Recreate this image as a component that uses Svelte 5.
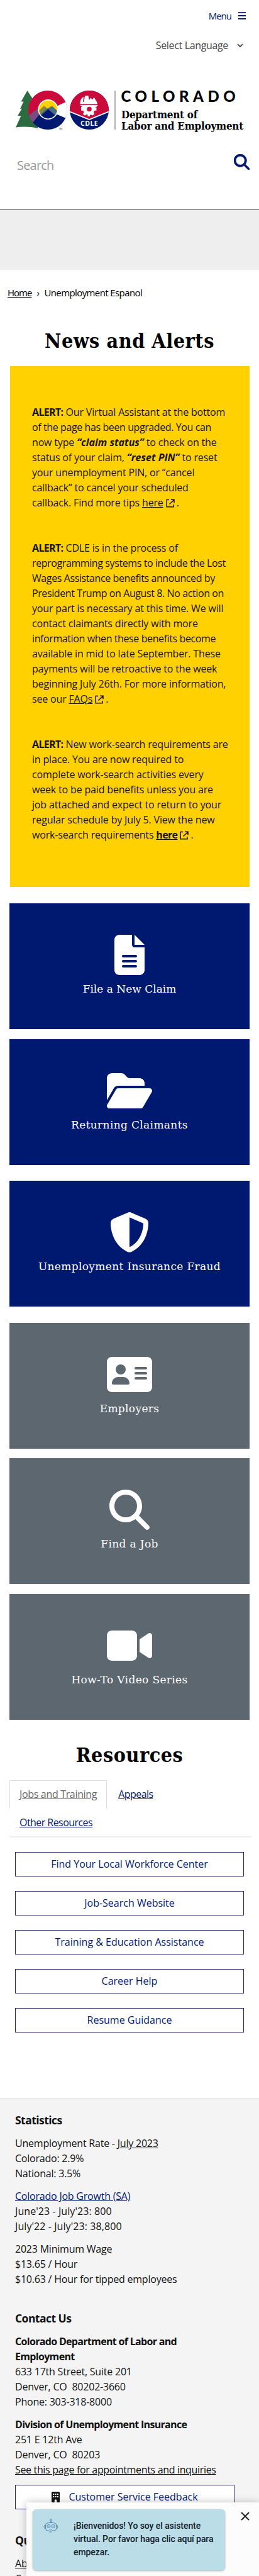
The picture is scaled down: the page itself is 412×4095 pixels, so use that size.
<script>
  const alerts = [
    [
      [{ t: 'ALERT:', k: 'b' }, { t: ' Our Virtual Assistant at the bottom' }],
      [{ t: 'of the page has been upgraded. You can', k: 'tight' }],
      [{ t: 'now type ' }, { t: '“claim status”', k: 'bi' }, { t: ' to check on the' }],
      [{ t: 'status of your claim, ' }, { t: '“reset PIN”', k: 'bi' }, { t: ' to reset' }],
      [{ t: 'your unemployment PIN, or “cancel' }],
      [{ t: 'callback” to cancel your scheduled' }],
      [{ t: 'callback. Find more tips ' }, { t: 'here', k: 'u' }, { k: 'ext' }, { t: '.' }]
    ],
    [
      [{ t: 'ALERT:', k: 'b' }, { t: ' CDLE is in the process of' }],
      [{ t: 'reprogramming systems to include the Lost', k: 'tight' }],
      [{ t: 'Wages Assistance benefits announced by', k: 'tight' }],
      [{ t: 'President Trump on August 8. No action on', k: 'tight' }],
      [{ t: 'your part is necessary at this time. We will' }],
      [{ t: 'contact claimants directly with more' }],
      [{ t: 'information when these benefits become', k: 'tight' }],
      [{ t: 'available in mid to late September. These' }],
      [{ t: 'payments will be retroactive to the week' }],
      [{ t: 'beginning July 26th. For more information,' }],
      [{ t: 'see our ' }, { t: 'FAQs', k: 'u' }, { k: 'ext' }, { t: '.' }]
    ],
    [
      [{ t: 'ALERT:', k: 'b' }, { t: ' New work-search requirements are' }],
      [{ t: 'in place. You are now required to' }],
      [{ t: 'complete work-search activities every' }],
      [{ t: 'week to be paid benefits unless you are' }],
      [{ t: 'job attached and expect to return to your' }],
      [{ t: 'regular schedule by July 5. View the new' }],
      [{ t: 'work-search requirements ' }, { t: 'here', k: 'b u' }, { k: 'ext' }, { t: '.' }]
    ]
  ];

  const cards = [
    { label: 'File a New Claim', tone: 'navy first', w: 384, d: 'M64 0C28.7 0 0 28.7 0 64V448c0 35.3 28.7 64 64 64H320c35.3 0 64-28.7 64-64V160H256c-17.7 0-32-14.3-32-32V0H64zM256 0V128H384L256 0zM112 256H272c8.8 0 16 7.2 16 16s-7.2 16-16 16H112c-8.8 0-16-7.2-16-16s7.2-16 16-16zm0 64H272c8.8 0 16 7.2 16 16s-7.2 16-16 16H112c-8.8 0-16-7.2-16-16s7.2-16 16-16zm0 64H272c8.8 0 16 7.2 16 16s-7.2 16-16 16H112c-8.8 0-16-7.2-16-16s7.2-16 16-16z' },
    { label: 'Returning Claimants', tone: 'navy', w: 576, d: 'M88.7 223.8L0 375.8V96C0 60.7 28.7 32 64 32H181.5c17 0 33.3 6.7 45.3 18.7l26.5 26.5c12 12 28.3 18.7 45.3 18.7H416c35.3 0 64 28.7 64 64v32H144c-22.8 0-43.8 12.1-55.3 31.8zm27.6 16.1C122.1 230 132.6 224 144 224H544c11.5 0 22 6.1 27.7 16.1s5.7 22.2-.1 32.1l-112 192C453.9 474 443.4 480 432 480H32c-11.5 0-22-6.1-27.7-16.1s-5.7-22.2 .1-32.1l112-192z' },
    { label: 'Unemployment Insurance Fraud', tone: 'navy gap', w: 512, d: 'M256 0c4.6 0 9.2 1 13.4 2.9L457.7 82.8c22 9.3 38.4 31 38.3 57.2c-.5 99.2-41.3 280.7-213.6 363.2c-16.7 8-36.1 8-52.8 0C57.3 420.7 16.5 239.2 16 140c-.1-26.2 16.3-47.9 38.3-57.2L242.7 2.9C246.8 1 251.4 0 256 0zm0 66.8V444.8C394 378 431.1 230.1 432 141.4L256 66.8z' },
    { label: 'Employers', tone: 'slate gap', w: 576, d: 'M64 32C28.7 32 0 60.7 0 96V416c0 35.3 28.7 64 64 64H512c35.3 0 64-28.7 64-64V96c0-35.3-28.7-64-64-64H64zm80 256h64c44.2 0 80 35.8 80 80c0 8.8-7.2 16-16 16H80c-8.8 0-16-7.2-16-16c0-44.2 35.8-80 80-80zm-32-96a64 64 0 1 1 128 0 64 64 0 1 1 -128 0zm256-32H496c8.8 0 16 7.2 16 16s-7.2 16-16 16H368c-8.8 0-16-7.2-16-16s7.2-16 16-16zm0 64H496c8.8 0 16 7.2 16 16s-7.2 16-16 16H368c-8.8 0-16-7.2-16-16s7.2-16 16-16zm0 64H496c8.8 0 16 7.2 16 16s-7.2 16-16 16H368c-8.8 0-16-7.2-16-16s7.2-16 16-16z' },
    { label: 'Find a Job', tone: 'slate', w: 512, d: 'M416 208c0 45.9-14.9 88.3-40 122.7L502.6 457.4c12.5 12.5 12.5 32.8 0 45.3s-32.8 12.5-45.3 0L330.7 376c-34.4 25.2-76.8 40-122.7 40C93.1 416 0 322.9 0 208S93.1 0 208 0S416 93.1 416 208zM208 352a144 144 0 1 0 0-288 144 144 0 1 0 0 288z' },
    { label: 'How-To Video Series', tone: 'slate', w: 576, d: 'M0 128C0 92.7 28.7 64 64 64H320c35.3 0 64 28.7 64 64V384c0 35.3-28.7 64-64 64H64c-35.3 0-64-28.7-64-64V128zM559.1 99.8c10.4 5.6 16.9 16.4 16.9 28.2V384c0 11.8-6.5 22.6-16.9 28.2s-23 5-32.9-1.6l-96-64L416 337.1V320 192 174.9l14.2-9.5 96-64c9.8-6.5 22.4-7.2 32.9-1.6z' }
  ];

  const resources = ['Find Your Local Workforce Center', 'Job-Search Website', 'Training & Education Assistance', 'Career Help', 'Resume Guidance'];
</script>

<div class="page">
  <header>
    <div class="menu"><span>Menu</span>
      <svg width="12" height="12" viewBox="0 0 12 12"><path d="M0 1.2h12M0 6h12M0 10.8h12" stroke="#001970" stroke-width="1.8" /></svg>
    </div>
    <div class="lang"><span>Select Language</span>
      <svg width="10" height="7" viewBox="0 0 10 7"><path d="M1 1.2l4 4 4-4" fill="none" stroke="#444" stroke-width="1.7" /></svg>
    </div>
    <svg class="logo" width="364" height="70" viewBox="24 142 364 70">
      <defs>
        <clipPath id="co"><circle cx="76" cy="175" r="31" /></clipPath>
        <clipPath id="sun"><circle cx="76.500" cy="174" r="14.300" /></clipPath>
        <clipPath id="seal"><circle cx="142" cy="175" r="31" /></clipPath>
      </defs>
      <path d="M43.500 144l9 14-3.500 .5 8 13-3 .5 6 14V204c-12-3-24-3-35-1.500l8.500-18.500h-5.500l7-11.500-3 .5 5.500-11.500h-4z" fill="#2c6a40" />
      <g clip-path="url(#co)">
        <path d="M44 143h64v34H64L52 194H44z" fill="#cb0a3c" />
        <path d="M44 200l9-8 11-13 12-7 12 8 20 4v24H44z" fill="#001970" />
        <path d="M44 186l11-10 6-3 4 6-12 15-5 4z" fill="#7a4b80" />
        <path d="M91 168.500l16-7.500 4 29-7-2.500-14-6z" fill="#fff" />
      </g>
      <circle cx="76.500" cy="174" r="16" fill="#fff" />
      <g clip-path="url(#sun)">
        <path d="M60 158h34v34H60z" fill="#ffd100" />
        <path d="M58 180l12-12 6 5 6-5 12 11v17H58z" fill="#8a8a35" />
        <path d="M58 188l11-11 7-5 8-2.500 10 9.500v13H58z" fill="#486d84" />
        <path d="M56 191l20.500-17.500L97 191v5H56z" fill="#001970" />
      </g>
      <text x="93.500" y="205.500" font-family="Inter" font-size="4" fill="#333">TM</text>
      <g clip-path="url(#seal)">
        <path d="M110 143h64v64h-64z" fill="#001970" />
        <path d="M110 143h64v33l-32 14-32-14z" fill="#cb0a3c" />
        <path d="M110 177l32 13 32-13" fill="none" stroke="#fff" stroke-width="1.800" />
      </g>
      <path d="M127.500 165.500c0-6 2-10 5.500-11.500l-1 8h1.500l1.500-9.500 5.500-.5 1 7 3-3.500 2.500 3 2.500-4 5 8.500.5 2.500z" fill="#fff" />
      <path d="M127 167h29l-3 3h-2.500l3 1v4.500l-3.500.5-1 2.500 1 3-3 2-2.500-1.500-1.500 1v2h-3.500v-2.500l-2-.7-2.500 2-3-2.500 1.500-3-1-2-3.500-.8V170l2-.5z" fill="#fff" />
      <circle cx="142" cy="173.500" r="3.800" fill="#cb0a3c" />
      <text x="128" y="199.600" font-family="Open Sans" font-weight="700" font-size="10.500" textLength="27.500" fill="#fff">CDLE</text>
      <path d="M183 144v62" stroke="#888" stroke-width="1.300" />
      <text x="192.500" y="162" font-family="Lato" font-weight="900" font-size="24" textLength="182" fill="#000">COLORADO</text>
      <text x="193" y="188" font-family="DejaVu Serif Condensed, DejaVu Serif" font-weight="700" font-size="16" textLength="121" lengthAdjust="spacingAndGlyphs">Department of</text>
      <text x="193" y="206" font-family="DejaVu Serif Condensed, DejaVu Serif" font-weight="700" font-size="16" textLength="194" lengthAdjust="spacingAndGlyphs">Labor and Employment</text>
    </svg>
    <div class="search"><span>Search</span>
      <svg width="25" height="25" viewBox="0 0 512 512"><path fill="#001970" stroke="#001970" stroke-width="14" d={cards[4].d} /></svg>
    </div>
  </header>
  <div class="banner"></div>
  <nav class="crumbs"><a href="#home">Home</a><span class="sep">›</span><span>Unemployment Espanol</span></nav>

  <h1>News and Alerts</h1>
  <section class="alerts">
    {#each alerts as lines}
      <p>
        {#each lines as line}
          <span class="line">{#each line as s}{#if s.k === 'ext'}<svg class="ext" width="14" height="14" viewBox="0 0 14 14"><path d="M5 1.500H1.200v11.300h10.800V9M8 1.300h5v5M12.600 1.700L5.500 8.500" fill="none" stroke="#1a1200" stroke-width="1.500" /></svg>{:else}<span class={s.k}>{s.t}</span>{/if}{/each}</span>
        {/each}
      </p>
    {/each}
  </section>

  <section class="cards">
    {#each cards as c}
      <div class="card {c.tone}">
        <svg width={c.w / 8} height="64" viewBox="0 0 {c.w} 512"><path fill="#fff" fill-rule="evenodd" d={c.d} /></svg>
        <span>{c.label}</span>
      </div>
    {/each}
  </section>

  <h1 class="res">Resources</h1>
  <div class="tabs">
    <a class="tab on" href="#jobs">Jobs and Training</a>
    <a class="tab" href="#appeals">Appeals</a>
    <a class="tab" href="#other">Other Resources</a>
  </div>
  <div class="buttons">
    {#each resources as r}<a class="btn" href="#r">{r}</a>{/each}
  </div>

  <footer>
    <h2>Statistics</h2>
    <p>Unemployment Rate - <u>July 2023</u><br />Colorado: 2.9%<br />National: 3.5%</p>
    <p><u class="blue">Colorado Job Growth (SA)</u><br /><span class="wide">June'23 - July'23: 800<br />July'22 - July'23: 38,800</span></p>
    <p>2023 Minimum Wage<br />$13.65 / Hour<br />$10.63 / Hour for tipped employees</p>
    <h2 class="second">Contact Us</h2>
    <p><b>Colorado Department of Labor and<br />Employment</b><br />633 17th Street, Suite 201<br />Denver, CO&nbsp; 80202-3660<br />Phone: 303-318-8000</p>
    <p><b>Division of Unemployment Insurance</b><br />251 E 12th Ave<br />Denver, CO&nbsp; 80203<br /><u class="see">See this page for appointments and inquiries</u></p>
    <a class="feedback" href="#feedback">
      <svg width="13" height="17" viewBox="0 0 13 17"><path d="M1.500 0h10A1.500 1.500 0 0 1 13 1.500v14a1.500 1.500 0 0 1-1.500 1.500H8.300v-3a1.800 1.800 0 0 0-3.600 0v3H1.500A1.500 1.500 0 0 1 0 15.500v-14A1.500 1.500 0 0 1 1.500 0z" fill="#111" /><path d="M2.200 3h2v2h-2zM5.500 3h2v2h-2zM8.800 3h2v2h-2zM2.200 7h2v2h-2zM5.500 7h2v2h-2zM8.800 7h2v2h-2z" fill="#fff" /></svg>
      <span>Customer Service Feedback</span>
    </a>
    <h2 class="quick">Quick Links</h2>
    <p><u>About Us</u><br /><u>Careers</u></p>
  </footer>

  <aside class="chat">
    <div class="bubble">
      <svg width="24" height="24" viewBox="0 0 24 24" fill="none" stroke="#5080b0" stroke-width="0.900"><circle cx="12" cy="2" r="1.300" /><path d="M12 3.300v3M9.500 6.300q0-1.200 2.500-1.200t2.500 1.200M3.500 9.500Q4 6.500 8 6.500h8q4 0 4.500 3v6q0 3.500-4 3.500h-3l-3 3.500V19H7.500q-4 0-4-3.500zM3.500 10Q1 10.300 1 13t2.500 2.800M20.500 10q2.500.3 2.500 3t-2.500 2.800" /><rect x="6" y="9.500" width="5" height="4.800" rx="2" /><rect x="13" y="9.500" width="5" height="4.800" rx="2" /><path d="M7.500 12h2M14.500 12h2M9.500 16.500h5" /></svg>
      <span>¡Bienvenidos! Yo soy el asistente<br />virtual. Por favor haga clic aquí para<br />empezar.</span>
    </div>
    <svg class="close" width="14" height="14" viewBox="0 0 14 14"><path d="M1 1l12 12M13 1L1 13" stroke="#222" stroke-width="2" /></svg>
  </aside>
</div>

<style>
  :global(body) { margin: 0; background: #fff; }
  .page { position: relative; width: 412px; height: 4095px; overflow: hidden; background: #fff; color: #111; font: 16px/24px 'Open Sans', sans-serif; letter-spacing: -0.22px; }
  .page * { box-sizing: border-box; }
  a { color: inherit; }
  header { height: 332px; display: flex; flex-direction: column; }
  .menu { height: 24px; margin-top: 13px; padding-right: 21px; display: flex; justify-content: flex-end; align-items: center; gap: 11px; color: #001970; font-size: 15px; letter-spacing: -1px; }
  .lang { height: 24px; margin-top: 23px; padding-right: 25px; display: flex; justify-content: flex-end; align-items: center; gap: 14px; color: #444; letter-spacing: -0.35px; }
  .logo { display: block; margin: 58px 0 0 24px; flex: none; }
  .search { margin-top: 33px; padding: 0 15px 0 27px; display: flex; justify-content: space-between; align-items: flex-start; font-size: 20px; color: #999; letter-spacing: -0.8px; }
  .search span { padding-top: 6px; }
  .banner { height: 97px; background: #eee; border-top: 2px solid #999; }
  .crumbs { margin-top: 12px; height: 48px; padding: 12px 12px 0; line-height: 24px; font-size: 15px; letter-spacing: -0.6px; display: flex; color: #000; }
  .crumbs a { letter-spacing: -1px; }
  .sep { width: 20px; text-align: center; }
  h1 { margin: 20px 0 0; height: 66px; line-height: 66px; text-align: center; font-family: 'DejaVu Serif Condensed', 'DejaVu Serif', serif; font-size: 32px; font-weight: 700; color: #000; letter-spacing: 0.55px; }
  .alerts { margin: 7px 15px 0 16px; height: 828px; background: #ffd100; color: #1a1200; padding: 61px 0 0 35px; letter-spacing: -0.17px; }
  .alerts p { margin: 0 0 48px; }
  .line { display: block; white-space: pre; height: 24px; }
  .tight { letter-spacing: -0.4px; }
  .b { font-weight: 700; letter-spacing: -0.65px; }
  .bi { font-weight: 700; font-style: italic; letter-spacing: 0; }
  .u { text-decoration: underline; }
  .ext { margin: 0 3px 0 4px; vertical-align: -2px; }
  .cards { margin: 26px 15px 0; display: flex; flex-direction: column; gap: 15.600px; }
  .card { height: 200px; display: flex; flex-direction: column; align-items: center; padding-top: 50px; color: #fff; font: 17px/24px 'DejaVu Serif', serif; letter-spacing: 0.35px; }
  .card.first { letter-spacing: 0; }
  .card span { margin-top: 10px; }
  .navy { background: #001970; }
  .slate { background: #5c6770; }
  .gap { margin-top: 10px; }
  .res { margin-top: 23.500px; }
  .tabs { margin: 6.500px 12px 0 15px; height: 91px; display: flex; flex-wrap: wrap; align-content: flex-start; border-bottom: 2px solid #eee; color: #001970; letter-spacing: -0.55px; }
  .tab { height: 45px; padding: 9px 15px; border: 1px solid transparent; margin-right: 2px; }
  .tab.on { color: #666; border-color: #ddd; border-bottom: 0; letter-spacing: -0.33px; }
  .buttons { margin: 23px 24px 0; display: flex; flex-direction: column; gap: 23px; }
  .btn, .feedback { display: flex; align-items: center; justify-content: center; height: 39px; border: 1px solid #2b2b66; color: #001970; text-decoration: none; background: #fff; letter-spacing: 0; }
  footer { margin-top: 105px; height: 760px; padding: 21px 24px 0; border-top: 1px solid #ccc; background: #f4f4f4; }
  h2 { margin: 0 0 13px; font-size: 17.500px; line-height: 24px; font-weight: 700; color: #111; letter-spacing: -0.54px; }
  footer p { margin: 0 0 12px; }
  footer b { letter-spacing: -0.68px; }
  .wide { letter-spacing: 0.08px; }
  .see { letter-spacing: -0.34px; }
  h2.second { margin-top: 38px; }
  .blue { color: #001970; }
  .feedback { width: 349px; gap: 14px; }
  h2.quick { margin: 37px 0 13px; }
  .chat { position: absolute; left: 42px; top: 3978px; width: 370px; height: 117px; background: #fcfcfc; box-shadow: 0 0 12px rgba(0, 0, 0, 0.25); display: flex; align-items: flex-start; padding: 11px 15px 0 10px; justify-content: space-between; }
  .bubble { width: 306px; height: 97px; border-radius: 6px; background: #badde8; box-shadow: 0 1px 3px rgba(0, 0, 0, 0.3); padding: 15px 0 0 17px; display: flex; gap: 24px; font: 500 14px/21px Roboto, sans-serif; letter-spacing: -0.07px; color: #14212b; }
  .bubble span { margin-top: 1px; white-space: nowrap; }
  .close { margin-top: 4px; }
</style>
